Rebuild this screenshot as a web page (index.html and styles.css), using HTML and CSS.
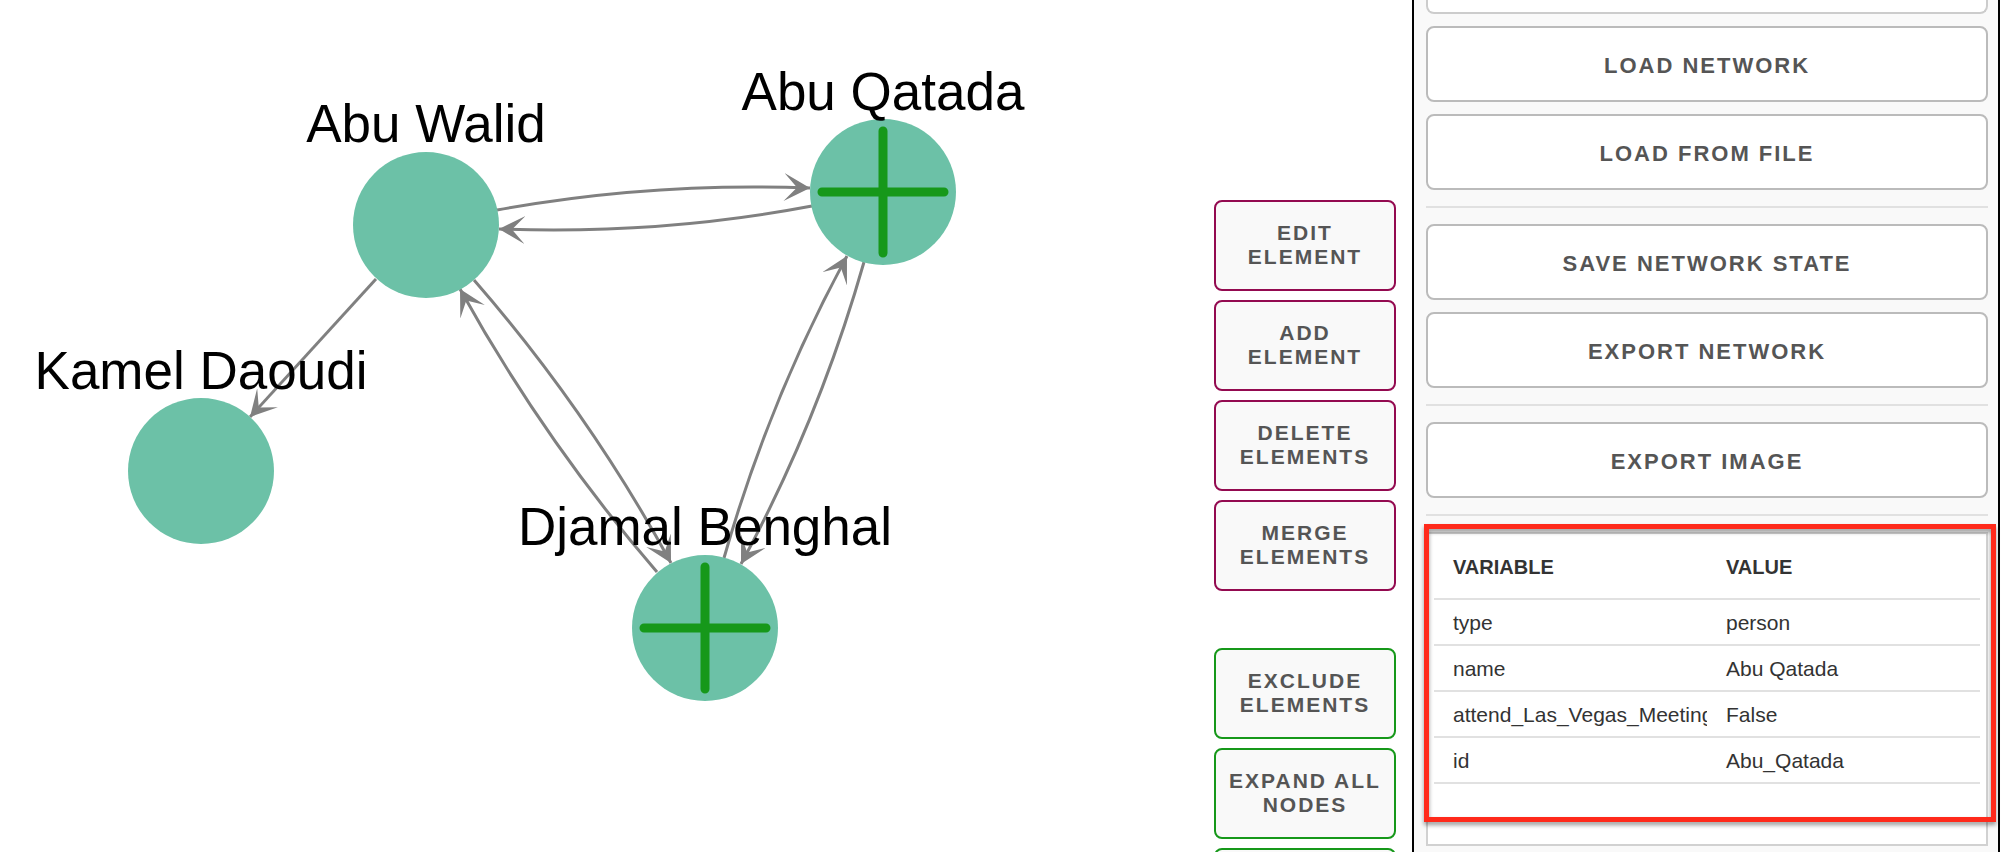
FILE: index.html
```html
<!DOCTYPE html>
<html lang="en">
<head>
<meta charset="utf-8">
<title>Network editor</title>
<link rel="stylesheet" href="styles.css">
</head>
<body>
<div class="app">
  <main class="canvas">
    <svg class="graph" width="1200" height="852" viewBox="0 0 1200 852" role="img" aria-label="Network graph">
      <defs>
        <marker id="vee" markerUnits="userSpaceOnUse" markerWidth="30" markerHeight="30" refX="26" refY="14" orient="auto">
          <path d="M26 14L0 0L13 14L0 28Z" fill="#808080"/>
        </marker>
      </defs>
      <g class="edges">
        <path d="M376 279L250 417"/>
        <path d="M497 210Q650 182 810 188"/>
        <path d="M812 206Q659 235 499 229"/>
        <path d="M474 280Q588 411 671 563"/>
        <path d="M657 572Q544 441 460 289"/>
        <path d="M724 558Q769 400 847 256"/>
        <path d="M864 262Q819 420 741 564"/>
      </g>
      <g class="nodes">
        <circle cx="426" cy="225" r="73"/>
        <circle cx="201" cy="471" r="73"/>
        <circle cx="883" cy="192" r="73"/>
        <circle cx="705" cy="628" r="73"/>
      </g>
      <g class="pluses">
        <path d="M883 131V253M822 192H944"/>
        <path d="M705 567V689M644 628H766"/>
      </g>
      <g class="labels">
        <text x="426" y="142">Abu Walid</text>
        <text x="201" y="389">Kamel Daoudi</text>
        <text x="883" y="110">Abu Qatada</text>
        <text x="705" y="545">Djamal Benghal</text>
      </g>
    </svg>
  </main>

  <nav class="tools">
    <div class="tool-group">
      <button class="tool edit" type="button">Edit element</button>
      <button class="tool edit" type="button">Add element</button>
      <button class="tool edit" type="button">Delete elements</button>
      <button class="tool edit" type="button">Merge elements</button>
    </div>
    <div class="tool-group">
      <button class="tool view" type="button">Exclude elements</button>
      <button class="tool view" type="button">Expand all nodes</button>
      <button class="tool view" type="button" aria-label="More"></button>
    </div>
  </nav>

  <aside class="panel">
    <div class="field-end"></div>
    <div class="actions">
      <button class="action" type="button">Load network</button>
      <button class="action" type="button">Load from file</button>
    </div>
    <hr class="rule">
    <div class="actions">
      <button class="action" type="button">Save network state</button>
      <button class="action" type="button">Export network</button>
    </div>
    <hr class="rule">
    <div class="actions">
      <button class="action" type="button">Export image</button>
    </div>
    <hr class="rule">
    <section class="details">
      <table class="vars">
        <thead><tr><th>VARIABLE</th><th>VALUE</th></tr></thead>
        <tbody>
          <tr><td>type</td><td>person</td></tr>
          <tr><td>name</td><td>Abu Qatada</td></tr>
          <tr><td>attend_Las_Vegas_Meeting</td><td>False</td></tr>
          <tr><td>id</td><td>Abu_Qatada</td></tr>
        </tbody>
      </table>
      <div class="highlight"></div>
    </section>
  </aside>
</div>
</body>
</html>
```

FILE: styles.css
```css
* { box-sizing: border-box; }

body {
  margin: 0;
  background: #fff;
  color: #333;
  font-family: "Liberation Sans", Arial, sans-serif;
}

.app {
  display: grid;
  grid-template-columns: minmax(0, 1fr) 182px 588px;
  column-gap: 16px;
  height: 100vh;
  padding-right: 12px;
  overflow: hidden;
}

.canvas { overflow: hidden; }
.graph { display: block; }
.edges { fill: none; stroke: #808080; stroke-width: 3px; }
.edges path { marker-end: url(#vee); }
.nodes { fill: #6cc1a7; }
.pluses { fill: none; stroke: #16981a; stroke-width: 9px; stroke-linecap: round; }
.labels { fill: #000; font-size: 53px; text-anchor: middle; }

.tools {
  display: flex;
  flex-direction: column;
  gap: 57px;
  padding-top: 200px;
  min-height: 0;
}
.tool-group { display: flex; flex-direction: column; gap: 9px; }

.tool,
.action {
  margin: 0;
  border: 2px solid #bbb;
  border-radius: 8px;
  color: #555;
  font-family: inherit;
  font-weight: 700;
  letter-spacing: 2px;
  text-transform: uppercase;
}
.tool {
  flex: none;
  height: 91px;
  padding: 0 8px 2px;
  background: #f9f9f9;
  font-size: 21px;
  line-height: 24px;
}
.edit { border-color: #930a50; }
.view { border-color: #16981a; }

.panel {
  border: solid #000;
  border-width: 0 2px;
  padding: 0 10px 0 12px;
  background: #f9f9f9;
}
.field-end {
  height: 14px;
  margin-bottom: 12px;
  border: 2px solid #ccc;
  border-top: 0;
  border-radius: 0 0 8px 8px;
  background: #fff;
}
.actions { display: flex; flex-direction: column; gap: 12px; }
.action {
  height: 76px;
  padding: 4px 8px 0;
  background: #fff;
  font-size: 22px;
  line-height: 24px;
}
.rule { margin: 16px 0; border: 0; border-top: 2px solid #e1e1e1; }

.details {
  position: relative;
  height: 314px;
  padding: 0 6px;
  border: 2px solid #d1d1d1;
  background: #fff;
}
.vars {
  width: 100%;
  table-layout: fixed;
  border-collapse: separate;
  border-spacing: 0;
  font-size: 21px;
  line-height: 24px;
}
.vars th,
.vars td {
  height: 46px;
  padding: 2px 0 0 19px;
  border-bottom: 2px solid #e1e1e1;
  overflow: hidden;
  text-align: left;
  white-space: nowrap;
}
.vars th { height: 66px; font-size: 20px; }

.highlight {
  position: absolute;
  inset: -10px -10px 22px -4px;
  border: 5px solid #ff2a1b;
  filter: drop-shadow(0 3px 2px rgba(0, 0, 0, 0.4));
}
```
